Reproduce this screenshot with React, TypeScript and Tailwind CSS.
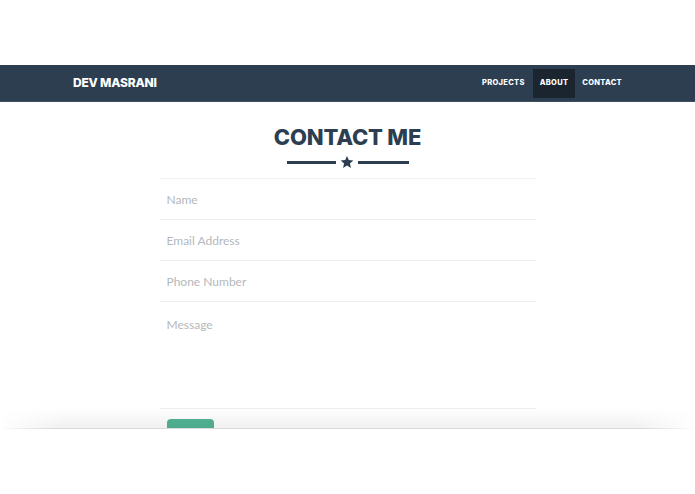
import React from "react";

function Star() {
  return (
    <svg width="14" height="14" viewBox="0 0 24 24" className="block">
      <path
        d="M12 1.5l3.1 7.2 7.8.7-5.9 5.1 1.8 7.6L12 18.1 5.2 22.1 7 14.5 1.1 9.4l7.8-.7z"
        fill="#2c3e50"
      />
    </svg>
  );
}

export default function App() {
  const fields = ["Name", "Email Address", "Phone Number"];
  return (
    <div className="relative w-[695px] h-[494px] bg-white overflow-hidden" style={{ fontFamily: "Lato, 'Noto Sans', sans-serif" }}>
      <div className="h-[65px]" />
      <nav className="h-[37px] bg-[#2c3e50] flex items-center justify-between pl-[73px] pr-[66px] border-b border-[#3d4f61]">
        <div className="text-white text-[12px] font-extrabold tracking-[-0.2px]" style={{ fontFamily: "Inter, 'Liberation Sans', sans-serif" }}>
          DEV MASRANI
        </div>
        <div className="flex items-center h-full text-white text-[7.5px] font-extrabold tracking-[0.3px]" style={{ fontFamily: "Inter, 'Liberation Sans', sans-serif" }}>
          <span className="px-[7px] h-[29px] flex items-center">PROJECTS</span>
          <span className="px-[7px] h-[29px] flex items-center bg-[#1a252f] ml-[1px]">ABOUT</span>
          <span className="px-[7px] h-[29px] flex items-center">CONTACT</span>
        </div>
      </nav>
      <main className="h-[327px] overflow-hidden flex flex-col items-center">
        <h2 className="mt-[22px] text-[22px] leading-[26px] font-extrabold text-[#2c3e50] tracking-[-0.2px]" style={{ fontFamily: "Inter, 'Liberation Sans', sans-serif" }}>
          CONTACT ME
        </h2>
        <div className="mt-[5px] flex items-center gap-[4px]">
          <div className="w-[49px] h-[3px] bg-[#2c3e50]" />
          <Star />
          <div className="w-[51px] h-[3px] bg-[#2c3e50]" />
        </div>
        <form className="mt-[9px] w-[376px] border-t border-[#f2f2f2]">
          {fields.map((f) => (
            <div key={f} className="h-[41px] border-b border-[#eeeeee] flex items-center pl-[7px] pt-[2px] text-[12px] text-[#b3b8bd]">
              {f}
            </div>
          ))}
          <div className="h-[107px] border-b border-[#eeeeee] pl-[7px] pt-[14px] text-[12px] text-[#b3b8bd]">
            Message
          </div>
          <div className="pl-[7px] pt-[10px]">
            <div className="w-[47px] h-[36px] rounded-[4px] bg-[#52b596]" />
          </div>
        </form>
      </main>
      <div className="absolute top-[408px] left-0 right-0 h-[21px] pointer-events-none bg-gradient-to-b from-transparent to-black/[0.06] [mask-image:linear-gradient(to_right,transparent,black_9%,black_91%,transparent)]" />
      <div className="absolute top-[428px] left-0 right-0 h-px bg-[#d9d9d9] [mask-image:linear-gradient(to_right,transparent,black_8%,black_92%,transparent)]" />
    </div>
  );
}
